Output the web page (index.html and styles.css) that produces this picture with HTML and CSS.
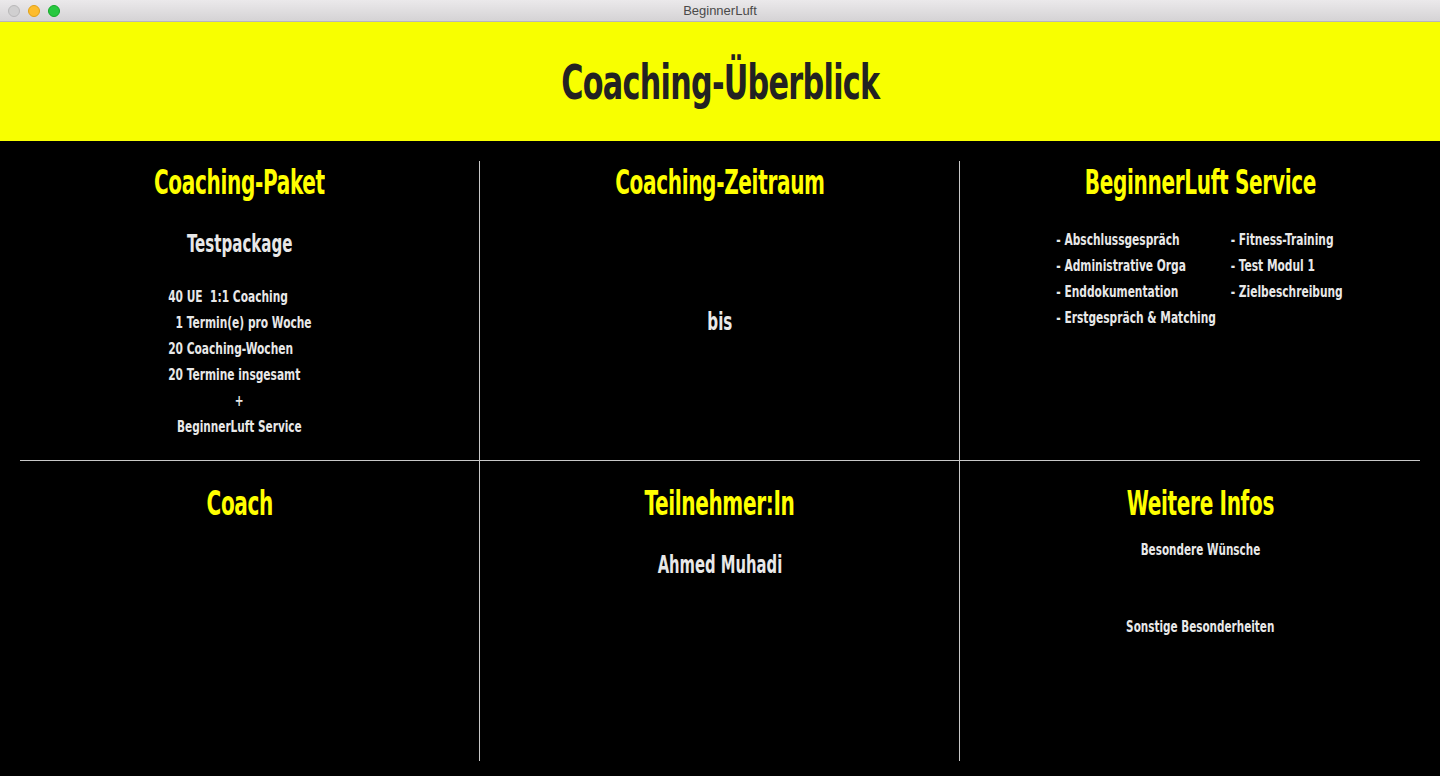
FILE: index.html
```html
<!DOCTYPE html>
<html lang="de">
<head>
<meta charset="utf-8">
<title>BeginnerLuft</title>
<link rel="stylesheet" href="styles.css">
</head>
<body>
<div class="titlebar">
  <div class="lights">
    <span class="light light-off"></span>
    <span class="light light-min"></span>
    <span class="light light-max"></span>
  </div>
  <div class="window-title">BeginnerLuft</div>
</div>
<header class="banner">
  <h1 class="banner-title">Coaching-Überblick</h1>
</header>
<main class="board">
  <section class="cell cell-top">
    <h2 class="cell-head">Coaching-Paket</h2>
    <div class="package-name">Testpackage</div>
    <div class="package-grid">
      <span class="num">40</span><span class="txt">UE  1:1 Coaching</span>
      <span class="num">1</span><span class="txt">Termin(e) pro Woche</span>
      <span class="num">20</span><span class="txt">Coaching-Wochen</span>
      <span class="num">20</span><span class="txt">Termine insgesamt</span>
    </div>
    <div class="line">+</div>
    <div class="line">BeginnerLuft Service</div>
  </section>
  <section class="cell cell-top">
    <h2 class="cell-head">Coaching-Zeitraum</h2>
    <div class="period">bis</div>
  </section>
  <section class="cell cell-top cell-last">
    <h2 class="cell-head">BeginnerLuft Service</h2>
    <ul class="service-list">
      <li>- Abschlussgespräch</li>
      <li>- Administrative Orga</li>
      <li>- Enddokumentation</li>
      <li>- Erstgespräch &amp; Matching</li>
      <li>- Fitness-Training</li>
      <li>- Test Modul 1</li>
      <li>- Zielbeschreibung</li>
    </ul>
  </section>
  <div class="divider"></div>
  <section class="cell cell-bottom">
    <h2 class="cell-head">Coach</h2>
  </section>
  <section class="cell cell-bottom">
    <h2 class="cell-head">Teilnehmer:In</h2>
    <div class="person">Ahmed Muhadi</div>
  </section>
  <section class="cell cell-bottom cell-last">
    <h2 class="cell-head">Weitere Infos</h2>
    <div class="info info-first">Besondere Wünsche</div>
    <div class="info info-second">Sonstige Besonderheiten</div>
  </section>
</main>
</body>
</html>
```
FILE: styles.css
```css
html, body {
  margin: 0;
  padding: 0;
  background: #000;
  overflow: hidden;
}

body {
  width: 1440px;
  height: 776px;
  font-family: "DejaVu Sans Condensed", "Liberation Sans", sans-serif;
  font-weight: bold;
}

/* macOS-like window title bar */
.titlebar {
  position: relative;
  height: 21px;
  border-bottom: 1px solid #b8b6b8;
  background: linear-gradient(#ebe9eb, #d5d3d5);
  display: flex;
  align-items: center;
  justify-content: center;
}

.lights {
  position: absolute;
  left: 8px;
  top: 5px;
  display: flex;
  gap: 8px;
}

.light {
  width: 12px;
  height: 12px;
  border-radius: 50%;
  box-sizing: border-box;
}

.light-off {
  background: #d0cfd0;
  border: 1px solid #b9b8b9;
}

.light-min {
  background: #fdbc2e;
  border: 1px solid #e1a116;
}

.light-max {
  background: #28c840;
  border: 1px solid #14a928;
}

.window-title {
  font-family: "Liberation Sans", sans-serif;
  font-weight: normal;
  font-size: 13px;
  color: #4a4a4a;
}

/* yellow banner */
.banner {
  height: 119px;
  background: #f8ff00;
  display: flex;
  align-items: center;
  justify-content: center;
}

.banner-title {
  margin: 0;
  font-size: 48px;
  line-height: 56px;
  color: #222;
  letter-spacing: -1px;
  transform: scaleX(0.70);
}

/* grid board */
.board {
  display: grid;
  grid-template-columns: repeat(3, 1fr);
  grid-template-rows: 299px 1px 300px;
  padding: 20px 0 15px;
}

.cell {
  box-sizing: border-box;
  border-right: 1px solid #c8c8c8;
  display: flex;
  flex-direction: column;
  align-items: center;
  color: #e8e8e8;
}

.cell-last {
  border-right: none;
}

.cell-bottom {
  padding-top: 21px;
}

.divider {
  grid-column: 1 / -1;
  margin: 0 20px;
  background: #c8c8c8;
}

.cell-head {
  margin: 0;
  font-size: 34px;
  line-height: 42px;
  color: #ffff00;
  letter-spacing: -0.5px;
  transform: scaleX(0.655);
}

.package-name {
  margin-top: 26px;
  font-size: 25px;
  line-height: 30px;
  transform: scaleX(0.67);
}

.package-grid {
  margin-top: 25px;
  display: grid;
  grid-template-columns: auto auto;
  column-gap: 5px;
  font-size: 16px;
  line-height: 26px;
  transform: scaleX(0.74);
}

.num {
  text-align: right;
}

.txt {
  white-space: pre;
}

.line {
  font-size: 16px;
  line-height: 26px;
  transform: scaleX(0.73);
}

.period {
  margin-top: 104px;
  font-size: 24px;
  line-height: 30px;
  transform: scaleX(0.70);
}

.service-list {
  margin: 24px 0 0;
  padding: 0;
  list-style: none;
  display: grid;
  grid-template-rows: repeat(4, 26px);
  grid-auto-flow: column;
  column-gap: 20px;
  font-size: 16px;
  line-height: 26px;
  transform: scaleX(0.74);
}

.person {
  margin-top: 26px;
  font-size: 24px;
  line-height: 30px;
  transform: scaleX(0.685);
}

.info {
  font-size: 16px;
  line-height: 20px;
  transform: scaleX(0.725);
}

.info-first {
  margin-top: 16px;
}

.info-second {
  margin-top: 57px;
}
```
